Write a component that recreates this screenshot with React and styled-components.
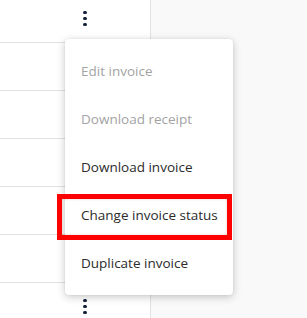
import React from "react";
import styled, { createGlobalStyle } from "styled-components";

const GlobalStyle = createGlobalStyle`
  * { box-sizing: border-box; }
  body {
    margin: 0;
    font-family: "Open Sans", "Noto Sans", sans-serif;
    background: #f9f9f9;
  }
`;

const Page = styled.div`
  position: relative;
  display: flex;
  width: 307px;
  height: 318px;
  overflow: hidden;
  background: #f9f9f9;
`;

const Table = styled.div`
  width: 151px;
  display: flex;
  flex-direction: column;
  margin-top: -5px;
  background: #fff;
  border-right: 1px solid #e2e2e2;
`;

const Row = styled.div`
  flex: 0 0 48px;
  display: flex;
  align-items: center;
  padding-left: 83px;
  border-bottom: 1px solid #e2e2e2;
`;

const Kebab = styled.div`
  display: flex;
  flex-direction: column;
  gap: 2.5px;

  span {
    width: 3.5px;
    height: 3.5px;
    border-radius: 50%;
    background: #14203a;
  }
`;

const Menu = styled.ul`
  position: absolute;
  left: 65px;
  top: 39px;
  width: 168px;
  margin: 0;
  padding: 8px 0;
  list-style: none;
  background: #fff;
  border-radius: 4px;
  box-shadow: 0 2px 8px rgba(0, 0, 0, 0.22), 0 0 2px rgba(0, 0, 0, 0.08);
`;

const Item = styled.li`
  height: 48px;
  display: flex;
  align-items: center;
  padding-left: 16px;
  font-size: 13.5px;
  color: ${(p) => (p.disabled ? "#a3a3a3" : "#2b2b2b")};
  white-space: nowrap;
`;

const Highlight = styled.div`
  position: absolute;
  left: 57px;
  top: 194px;
  width: 175px;
  height: 46px;
  border: 5px solid #ff0000;
  box-shadow: inset 0 0 3px rgba(180, 60, 60, 0.25);
  pointer-events: none;
`;

const items = [
  { label: "Edit invoice", disabled: true },
  { label: "Download receipt", disabled: true },
  { label: "Download invoice" },
  { label: "Change invoice status" },
  { label: "Duplicate invoice" },
];

const Dots = () => (
  <Kebab>
    <span />
    <span />
    <span />
  </Kebab>
);

export default function App() {
  return (
    <>
      <GlobalStyle />
      <Page>
        <Table>
          <Row><Dots /></Row>
          <Row />
          <Row />
          <Row />
          <Row />
          <Row />
          <Row><Dots /></Row>
        </Table>
        <Menu>
          {items.map((it) => (
            <Item key={it.label} disabled={it.disabled}>{it.label}</Item>
          ))}
        </Menu>
        <Highlight />
      </Page>
    </>
  );
}
